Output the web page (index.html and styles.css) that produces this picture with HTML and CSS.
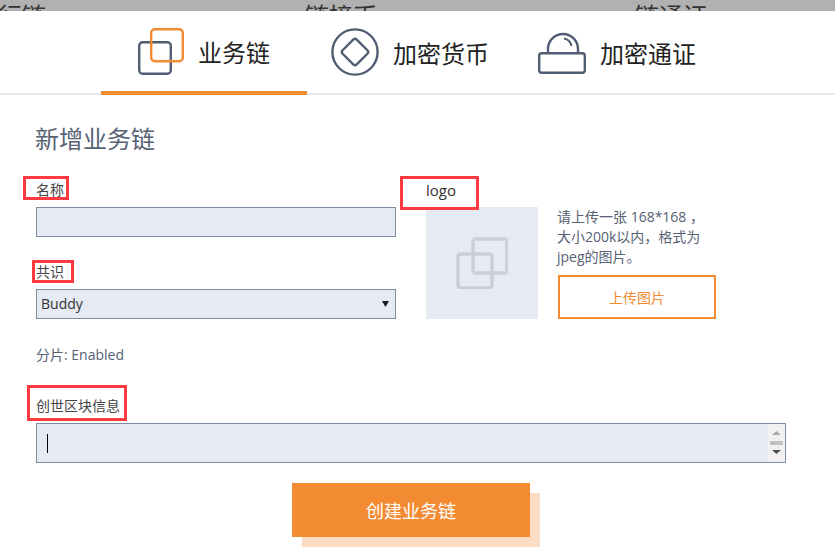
FILE: index.html
```html
<!DOCTYPE html>
<html lang="zh">
<head>
<meta charset="utf-8">
<title>新增业务链</title>
<link rel="stylesheet" href="styles.css">
</head>
<body>
<div class="backdrop">
  <span class="backdrop-a">发行链</span>
  <span class="backdrop-b">链接币</span>
  <span class="backdrop-c">链通证</span>
</div>
<nav class="tabs">
  <a class="tab tab-active">
    <svg class="tab-icon" width="46" height="47" viewBox="0 0 46 47" fill="none">
      <rect x="1.2" y="14.2" width="31.6" height="31.6" rx="3.5" stroke="#505d72" stroke-width="2.4"/>
      <rect x="13.2" y="1.2" width="31.6" height="32" rx="3.5" stroke="#f38b33" stroke-width="2.4"/>
    </svg>
    <span>业务链</span>
  </a>
  <a class="tab tab-coin">
    <svg class="tab-icon" width="48" height="48" viewBox="0 0 48 48" fill="none" stroke="#505d72">
      <circle cx="24" cy="24" r="22.6" stroke-width="2.4"/>
      <rect x="14" y="14" width="20" height="20" rx="2.5" stroke-width="2.4" transform="rotate(45 24 24)"/>
    </svg>
    <span>加密货币</span>
  </a>
  <a class="tab tab-token">
    <svg class="tab-icon" width="48" height="42" viewBox="0 0 48 42" fill="none" stroke="#505d72">
      <path d="M10 21v-4a15 15 0 0 1 30 0v4" stroke-width="2.4"/>
      <rect x="1.2" y="21.2" width="45.6" height="19.6" rx="2.5" stroke-width="2.4"/>
      <path d="M26 6.500a9.500 9.500 0 0 1 7.500 7.500" stroke-width="2"/>
    </svg>
    <span>加密通证</span>
  </a>
</nav>
<main class="page">
  <h1 class="title">新增业务链</h1>
  <div class="top-row">
    <div class="fields">
      <label class="label">名称</label>
      <input class="control" type="text">
      <label class="label label-next">共识</label>
      <div class="select">
        <span>Buddy</span>
        <svg width="7" height="7" viewBox="0 0 7 7"><path d="M0 1h7L3.5 7z" fill="#1a1a1a"/></svg>
      </div>
    </div>
    <div class="logo-col">
      <div class="logo-label">logo</div>
      <div class="logo-box">
        <svg width="52" height="52" viewBox="0 0 52 52" fill="none" stroke="#c9ced8" stroke-width="3.4">
          <rect x="2" y="17" width="34" height="34" rx="2.5"/>
          <rect x="17" y="2" width="34" height="34" rx="2.5"/>
        </svg>
      </div>
    </div>
    <div class="upload-col">
      <p class="help">请上传一张 168*168 ，<br>大小200k以内，格式为<br>jpeg的图片。</p>
      <button class="upload" type="button">上传图片</button>
    </div>
  </div>
  <p class="sharding">分片: Enabled</p>
  <label class="label label-genesis">创世区块信息</label>
  <div class="textarea">
    <span class="caret"></span>
    <div class="scrollbar">
      <svg width="9" height="4" viewBox="0 0 9 4"><path d="M0 4h9L4.500 0z" fill="#a8a8a8"/></svg>
      <span class="thumb"></span>
      <svg width="9" height="4" viewBox="0 0 9 4"><path d="M0 0h9L4.500 4z" fill="#505050"/></svg>
    </div>
  </div>
  <div class="actions">
    <button class="submit" type="button">创建业务链</button>
  </div>
</main>
<span class="mark mark-name"></span>
<span class="mark mark-logo"></span>
<span class="mark mark-consensus"></span>
<span class="mark mark-genesis"></span>
</body>
</html>
```

FILE: styles.css
```css
* { box-sizing: border-box; }
html, body { margin: 0; padding: 0; }
body {
  position: relative;
  width: 835px;
  height: 558px;
  overflow: hidden;
  background: #fff;
  color: #2f2f2f;
  font-family: "Open Sans", "Noto Sans CJK SC", sans-serif;
  font-size: 14px;
}
.backdrop {
  display: flex;
  height: 11px;
  overflow: hidden;
  background: #b1b1b1;
  color: #333;
  font-size: 24px;
  line-height: 24px;
  white-space: nowrap;
}
.backdrop span { display: block; padding-top: 4px; flex: none; }
.backdrop-a { margin-left: -26px; }
.backdrop-b { margin-left: 259px; }
.backdrop-c { margin-left: 258px; }
.tabs {
  display: flex;
  height: 84px;
  padding-left: 101px;
  border-bottom: 2px solid #e7e7ec;
  color: #222;
  font-size: 24px;
}
.tab {
  display: flex;
  align-items: center;
  height: 84px;
  gap: 14px;
  flex: none;
}
.tab-active {
  width: 206px;
  padding-left: 37px;
  gap: 14px;
  border-bottom: 4px solid #f38b33;
}
.tab-coin { margin-left: 24px; }
.tab-token { margin-left: 49px; }
.tab span { line-height: 32px; margin-top: 2px; }
.tab-active span { margin-top: 4px; }
.tab-icon { flex: none; }
.tab-active .tab-icon { margin-top: 1px; }
.tab-coin .tab-icon { margin-top: -2px; }
.tab-token .tab-icon { margin-top: -1px; }
.page { padding: 28px 0 0 36px; }
.title {
  margin: 0 0 22px -1px;
  font-size: 24px;
  font-weight: 400;
  line-height: 32px;
  color: #566173;
}
.top-row { display: flex; align-items: flex-start; }
.fields { width: 360px; flex: none; display: flex; flex-direction: column; }
.label {
  display: block;
  height: 26px;
  margin-bottom: 4px;
  line-height: 26px;
  color: #444;
}
.label-next { margin-top: 22px; }
.label-genesis { margin-top: 28px; }
.control {
  display: block;
  width: 360px;
  height: 30px;
  padding: 0 4px;
  border: 1px solid #7d8ca5;
  border-radius: 0;
  background: #e6eaf2;
  outline: none;
}
.select {
  display: flex;
  align-items: center;
  justify-content: space-between;
  width: 360px;
  height: 30px;
  padding: 0 6px 2px 4px;
  border: 1px solid #7d8ca5;
  background: #e6eaf2;
  color: #333;
}
.logo-col { width: 112px; margin-left: 30px; flex: none; }
.logo-label { height: 30px; line-height: 26px; font-size: 15px; color: #333; }
.logo-box {
  display: flex;
  align-items: center;
  justify-content: center;
  width: 112px;
  height: 112px;
  background: #e6eaf2;
}
.upload-col { width: 158px; margin-left: 20px; padding-top: 30px; flex: none; }
.help {
  margin: 0 0 0 -1px;
  line-height: 20px;
  color: #566173;
  white-space: nowrap;
}
.upload {
  display: block;
  width: 158px;
  height: 44px;
  margin-top: 8px;
  border: 2px solid #f38b33;
  background: #fff;
  color: #f38b33;
  font: inherit;
  font-size: 14px;
}
.sharding {
  margin: 26px 0 0;
  line-height: 20px;
  color: #566173;
}
.textarea {
  display: flex;
  justify-content: space-between;
  width: 750px;
  height: 40px;
  padding-left: 10px;
  border: 1px solid #7d8ca5;
  background: #e6eaf2;
}
.caret {
  width: 1px;
  height: 19px;
  margin-top: 10px;
  background: #000;
}
.scrollbar {
  display: flex;
  flex-direction: column;
  align-items: center;
  width: 17px;
  padding-top: 7px;
  background: #f1f1f1;
}
.thumb { width: 13px; height: 4px; margin: 6px 0 5px; background: #c1c1c1; }
.actions { margin: 20px 0 0 256px; }
.submit {
  display: block;
  width: 238px;
  height: 54px;
  border: 0;
  background: #f38b33;
  box-shadow: 10px 10px 0 #fcdcc3;
  color: #fff;
  font: inherit;
  font-size: 18px;
}
.mark { position: absolute; border: 3px solid #fd3a3f; }
.mark-name { left: 23px; top: 176px; width: 46px; height: 24px; }
.mark-logo { left: 400px; top: 176px; width: 79px; height: 34px; }
.mark-consensus { left: 32px; top: 260px; width: 42px; height: 23px; }
.mark-genesis { left: 27px; top: 385px; width: 100px; height: 36px; }
```
